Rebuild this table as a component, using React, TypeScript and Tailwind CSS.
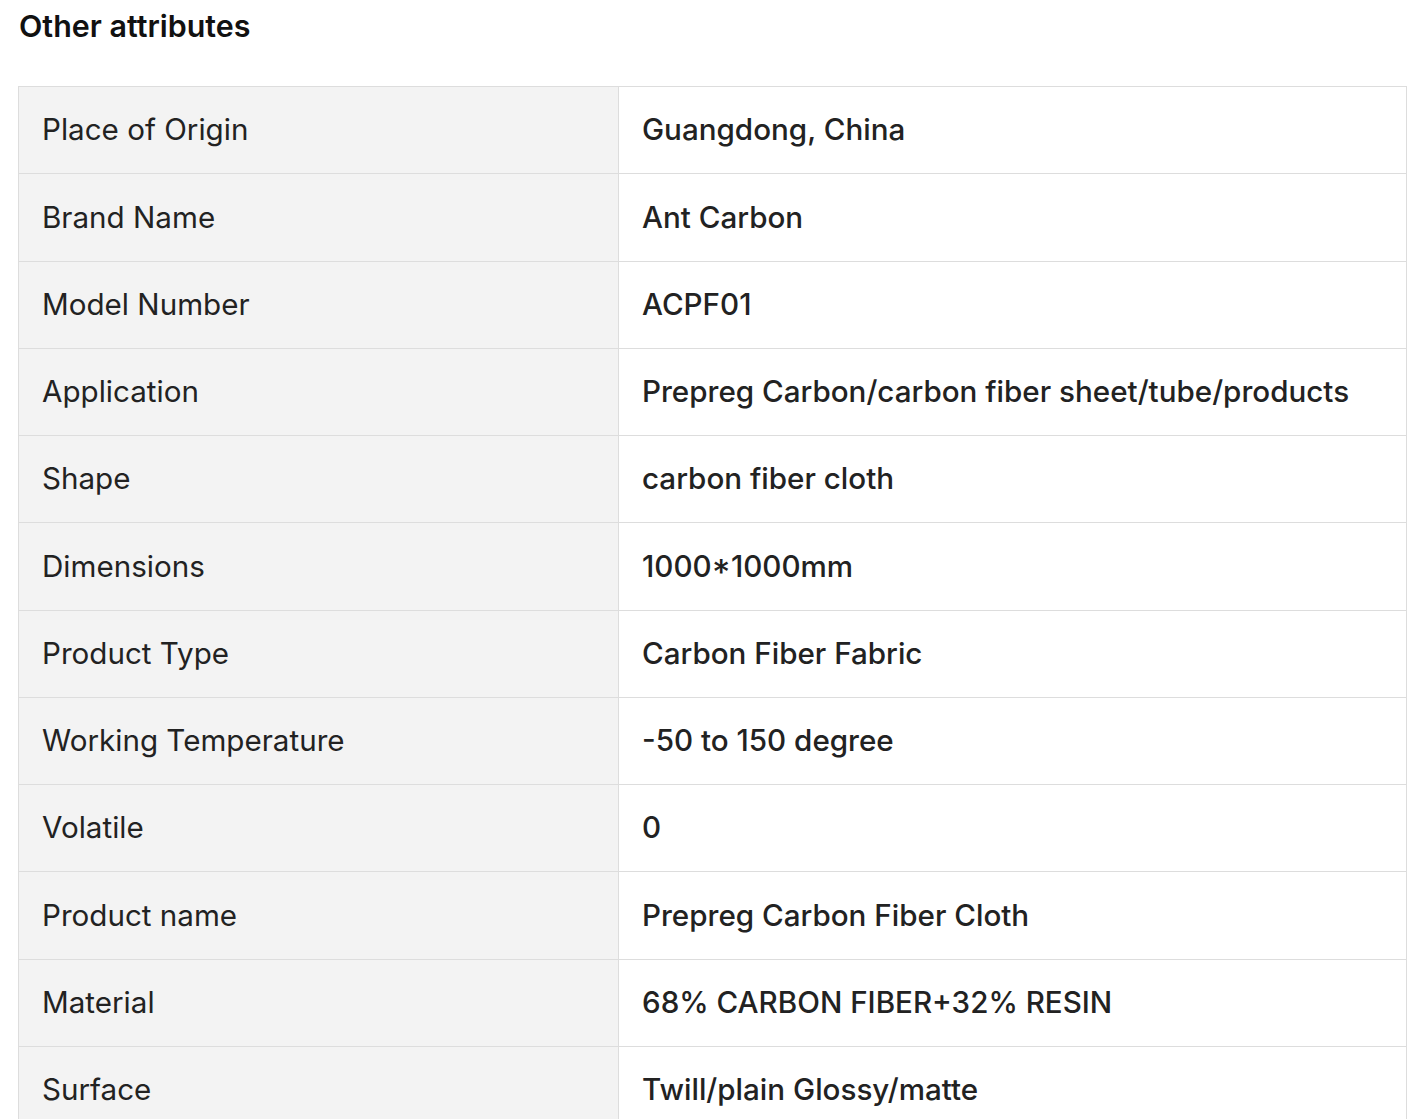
import React from "react";

const rows: [string, string][] = [
  ["Place of Origin", "Guangdong, China"],
  ["Brand Name", "Ant Carbon"],
  ["Model Number", "ACPF01"],
  ["Application", "Prepreg Carbon/carbon fiber sheet/tube/products"],
  ["Shape", "carbon fiber cloth"],
  ["Dimensions", "1000*1000mm"],
  ["Product Type", "Carbon Fiber Fabric"],
  ["Working Temperature", "-50 to 150 degree"],
  ["Volatile", "0"],
  ["Product name", "Prepreg Carbon Fiber Cloth"],
  ["Material", "68% CARBON FIBER+32% RESIN"],
  ["Surface", "Twill/plain Glossy/matte"],
];

export default function App() {
  return (
    <div className="bg-white min-h-[1119px] overflow-hidden" style={{ fontFamily: "Inter, 'Noto Sans', sans-serif" }}>
      <h2 className="ml-[19px] pt-[8px] text-[30.4px] leading-[36px] font-semibold text-[#111]">Other attributes</h2>
      <div className="ml-[18px] mt-[42px] w-[1389px] border-t border-l border-r border-[#dddddd]">
        {rows.map(([k, v]) => (
          <div key={k} className="flex h-[87.25px] border-b border-[#dddddd]">
            <div className="w-[600px] shrink-0 bg-[#f3f3f3] border-r border-[#dddddd] flex items-center pl-[23px] pb-[1px] text-[29.6px] text-[#222]">
              {k}
            </div>
            <div className="flex-1 flex items-center pl-[23px] pb-[1px] text-[29.6px] font-medium text-[#222]">{v}</div>
          </div>
        ))}
      </div>
    </div>
  );
}
